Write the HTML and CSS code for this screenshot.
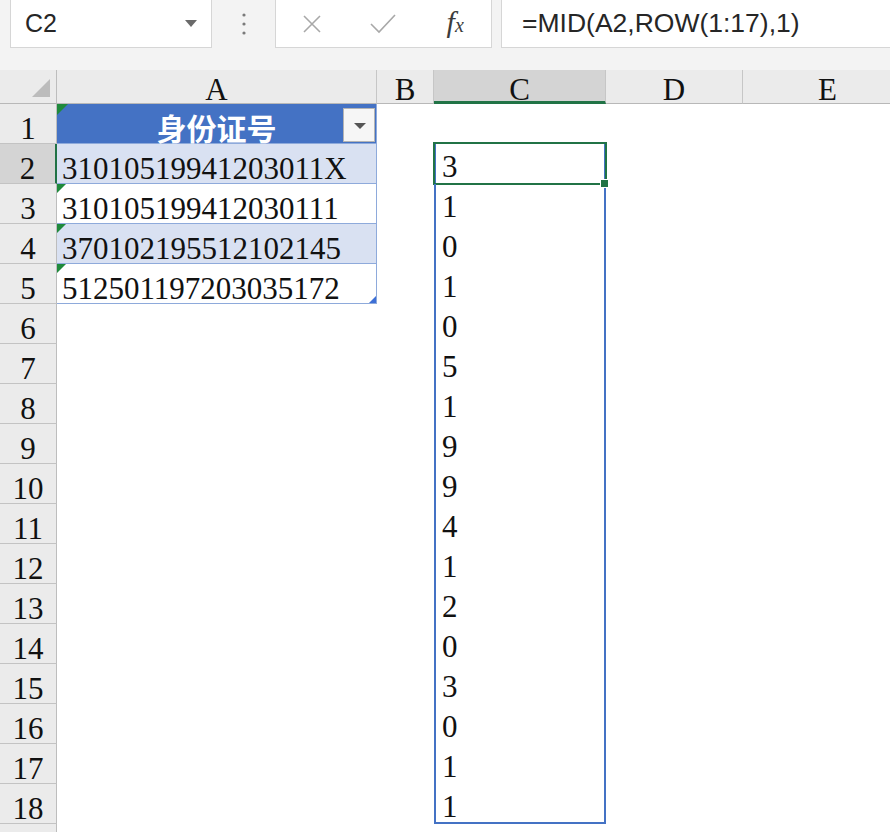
FILE: index.html
```html
<!DOCTYPE html>
<html lang="zh-CN">
<head>
  <meta charset="UTF-8">
  <meta name="viewport" content="width=device-width, initial-scale=1.0">
  <title>身份证号拆分</title>
  <link rel="stylesheet" href="styles.css">
</head>
<body>
  <div class="fbar">
    <div class="namebox"><span>C2</span><i class="caret"></i></div>
    <div class="grip">
      <svg width="6" height="24" viewBox="0 0 6 24"><circle cx="3" cy="3" r="1.6"/><circle cx="3" cy="12" r="1.6"/><circle cx="3" cy="21" r="1.6"/></svg>
    </div>
    <div class="btns">
      <svg class="icon" width="20" height="20" viewBox="0 0 20 20"><path d="M2 2 L18 18 M18 2 L2 18"/></svg>
      <svg class="icon" width="26" height="20" viewBox="0 0 26 20"><path d="M1 10 L9 18 L25 1"/></svg>
      <span class="fx">f<small>x</small></span>
    </div>
    <div class="formula">=MID(A2,ROW(1:17),1)</div>
  </div>

  <div class="sheet">
    <div class="corner"></div>
    <div class="colh">A</div>
    <div class="colh">B</div>
    <div class="colh sel">C</div>
    <div class="colh">D</div>
    <div class="colh">E</div>

    <div class="rowh">1</div>
    <div class="cell thead txt">身份证号<span class="filter"></span></div>

    <div class="rowh sel">2</div>
    <div class="cell band">31010519941203011X</div>
    <div class="spill active">3</div>

    <div class="rowh">3</div>
    <div class="cell txt">310105199412030111</div>
    <div class="spill">1</div>

    <div class="rowh">4</div>
    <div class="cell band txt">370102195512102145</div>
    <div class="spill">0</div>

    <div class="rowh">5</div>
    <div class="cell txt last">512501197203035172</div>
    <div class="spill">1</div>

    <div class="rowh">6</div>
    <div class="spill">0</div>
    <div class="rowh">7</div>
    <div class="spill">5</div>
    <div class="rowh">8</div>
    <div class="spill">1</div>
    <div class="rowh">9</div>
    <div class="spill">9</div>
    <div class="rowh">10</div>
    <div class="spill">9</div>
    <div class="rowh">11</div>
    <div class="spill">4</div>
    <div class="rowh">12</div>
    <div class="spill">1</div>
    <div class="rowh">13</div>
    <div class="spill">2</div>
    <div class="rowh">14</div>
    <div class="spill">0</div>
    <div class="rowh">15</div>
    <div class="spill">3</div>
    <div class="rowh">16</div>
    <div class="spill">0</div>
    <div class="rowh">17</div>
    <div class="spill">1</div>
    <div class="rowh">18</div>
    <div class="spill end">1</div>
    <div class="rowh"></div>
  </div>
</body>
</html>
```

FILE: styles.css
```css
body {
  margin: 0;
  width: 890px;
  height: 832px;
  overflow: hidden;
  background: #f3f3f3;
  font-family: "Liberation Serif", "Times New Roman", serif;
  color: #111;
}

/* formula bar */
.fbar {
  display: flex;
  height: 48px;
  margin-bottom: 22px;
  font-family: "Liberation Sans", Arial, sans-serif;
  font-size: 25px;
  color: #262626;
}

.namebox {
  display: flex;
  align-items: center;
  justify-content: space-between;
  width: 202px;
  margin-left: 10px;
  padding: 0 14px;
  box-sizing: border-box;
  background: #fff;
  border: 1px solid #d6d6d6;
  border-top: none;
}

.caret {
  border-left: 6px solid transparent;
  border-right: 6px solid transparent;
  border-top: 7px solid #6a6a6a;
}

.grip {
  display: flex;
  align-items: center;
  justify-content: center;
  width: 63px;
  fill: #7a7a7a;
}

.btns {
  display: grid;
  grid-template-columns: repeat(3, 1fr);
  align-items: center;
  justify-items: center;
  width: 217px;
  box-sizing: border-box;
  background: #fff;
  border: 1px solid #d6d6d6;
  border-top: none;
}

.icon {
  fill: none;
  stroke: #a8a8a8;
  stroke-width: 1.6;
}

.fx {
  font-family: "Liberation Serif", serif;
  font-style: italic;
  font-size: 30px;
  line-height: 30px;
  color: #3c3c3c;
}

.fx small {
  font-size: 20px;
}

.formula {
  flex: 1;
  display: flex;
  align-items: center;
  margin-left: 9px;
  padding-left: 20px;
  background: #fff;
  border: 1px solid #d6d6d6;
  border-top: none;
  border-right: none;
  font-size: 26.5px;
}

/* sheet */
.sheet {
  display: grid;
  grid-template-columns: 57px 320px 57px 172px 137px 170px;
  grid-template-rows: 34px;
  grid-auto-rows: 40px;
  background: #fff;
  font-size: 31px;
  line-height: 29px;
}

.corner {
  grid-column: 1;
  position: relative;
  background: #ebebeb;
  border-right: 1px solid #bdbdbd;
  border-bottom: 1px solid #b8b8b8;
}

.corner::after {
  content: "";
  position: absolute;
  right: 6px;
  bottom: 6px;
  border-bottom: 18px solid #bcbcbc;
  border-left: 18px solid transparent;
}

.colh {
  display: flex;
  align-items: flex-end;
  justify-content: center;
  padding-bottom: 2px;
  line-height: 22px;
  background: #ebebeb;
  border-right: 1px solid #c6c6c6;
  border-bottom: 1px solid #b8b8b8;
}

.colh.sel {
  background: #d4d4d4;
  border-bottom: 3px solid #217346;
  padding-bottom: 0;
}

.rowh {
  grid-column: 1;
  display: flex;
  align-items: flex-end;
  justify-content: center;
  background: #ebebeb;
  border-right: 1px solid #bdbdbd;
  border-bottom: 1px solid #c3c3c3;
}

.rowh.sel {
  background: #d4d4d4;
  border-right: 2px solid #217346;
}

.cell {
  grid-column: 2;
  position: relative;
  display: flex;
  align-items: flex-end;
  padding-left: 5px;
  border-right: 1px solid #8eaadb;
  border-bottom: 1px solid #8eaadb;
}

.band {
  background: #d9e1f2;
}

.thead {
  justify-content: center;
  align-items: center;
  padding: 6px 0 0;
  background: #4472c4;
  color: #fff;
  font-family: "Noto Sans CJK SC", sans-serif;
  font-weight: bold;
  font-size: 30px;
  line-height: 30px;
}

.filter {
  position: absolute;
  top: 4px;
  right: 1px;
  width: 32px;
  height: 34px;
  box-sizing: border-box;
  background: #f6f6f6;
  border: 1px solid #b4b4b4;
}

.filter::after {
  content: "";
  position: absolute;
  left: 10px;
  top: 14px;
  border-left: 6px solid transparent;
  border-right: 6px solid transparent;
  border-top: 6px solid #555;
}

/* green "number stored as text" marks */
.txt::before {
  content: "";
  position: absolute;
  left: 0;
  top: 0;
  border-top: 9px solid #1f8a3c;
  border-right: 9px solid transparent;
}

.thead::before {
  border-top-width: 11px;
  border-right-width: 11px;
}

.last::after {
  content: "";
  position: absolute;
  right: 0;
  bottom: 0;
  border-bottom: 7px solid #3d6fd6;
  border-left: 7px solid transparent;
}

/* spilled formula range */
.spill {
  grid-column: 4;
  position: relative;
  display: flex;
  align-items: flex-end;
  padding: 0 0 3px 6px;
  border-left: 2px solid #4472c4;
  border-right: 2px solid #4472c4;
}

.spill.end {
  border-bottom: 2px solid #4472c4;
  padding-bottom: 1px;
}

.active::after {
  content: "";
  position: absolute;
  top: -2px;
  left: -3px;
  right: -3px;
  bottom: -1px;
  border: 2px solid #217346;
}

.active::before {
  content: "";
  position: absolute;
  right: -5px;
  bottom: -4px;
  width: 7px;
  height: 7px;
  background: #217346;
  border: 1px solid #fff;
  z-index: 1;
}
```
